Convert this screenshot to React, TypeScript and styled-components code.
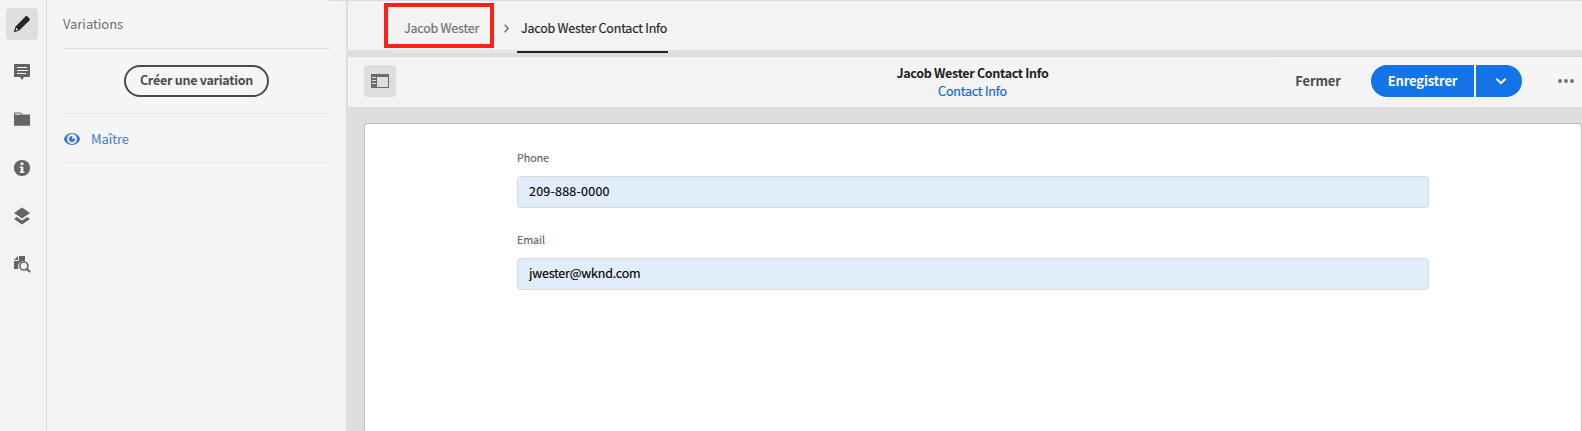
import React from 'react';
import styled, { createGlobalStyle, css } from 'styled-components';

const GlobalStyle = createGlobalStyle`
  * { box-sizing: border-box; }
  html, body, #root { height: 100%; }
  body {
    margin: 0;
    overflow: hidden;
    background: #ddd;
    font-family: "Noto Sans CJK JP", "Noto Sans", sans-serif;
    font-size: 12.5px;
    line-height: 18px;
    color: #1e1e1e;
  }
`;

const Page = styled.div`
  display: flex;
  height: 100vh;
`;

const Rail = styled.nav`
  display: flex;
  flex-direction: column;
  align-items: center;
  gap: 16px;
  width: 47px;
  padding: 8px 2px 0 0;
  background: #f3f3f3;
  border-right: 1px solid #dcdcdc;
`;

const RailButton = styled.button<{ $active?: boolean }>`
  display: flex;
  align-items: center;
  justify-content: center;
  width: 32px;
  height: 32px;
  padding: 0;
  border: 0;
  border-radius: 4px;
  color: #646464;
  background: ${p => (p.$active ? '#dedede' : 'transparent')};
  svg { display: block; }
`;

const SidePanel = styled.aside`
  width: 299px;
  padding: 5px 10px 0 7px;
  background: #f3f3f3;
`;

const PanelEdge = styled.div`
  width: 18px;
  height: 1px;
  margin: -5px -10px 5px auto;
  background: #ddd;
`;

const PanelCard = styled.section`
  height: 218px;
  padding: 0 6px 0 9px;
  background: #f5f5f5;
`;

const PanelTitle = styled.div`
  height: 43px;
  padding-top: 9px;
  border-bottom: 1px solid #dfdfdf;
  font-size: 13px;
  letter-spacing: -0.05px;
  color: #6e6e6e;
`;

const PanelAction = styled.div`
  display: flex;
  justify-content: center;
  height: 65px;
  padding-top: 16px;
  border-bottom: 1px solid #e8e8e8;
`;

const OutlineButton = styled.button`
  width: 145px;
  height: 32px;
  padding: 0 0 2px;
  border: 2px solid #4b4b4b;
  border-radius: 16px;
  background: #f5f5f5;
  color: #4b4b4b;
  font: 700 12.5px/18px "Noto Sans CJK JP", sans-serif;
  letter-spacing: -0.25px;
  white-space: nowrap;
`;

const VariationItem = styled.div`
  display: flex;
  align-items: center;
  gap: 11px;
  height: 49px;
  padding: 2px 0 0 1px;
  border-bottom: 1px solid #e8e8e8;
  color: #3f78d0;
  font-size: 13px;
  letter-spacing: -0.1px;
`;

const Main = styled.main`
  display: flex;
  flex: 1;
  flex-direction: column;
  min-width: 0;
  padding: 1px 0 0 2px;
  background: #ddd;
`;

const Breadcrumbs = styled.header`
  display: flex;
  height: 49px;
  padding-left: 36px;
  background: #f3f3f3;
  letter-spacing: -0.22px;
`;

const Highlight = styled.div`
  width: 110px;
  height: 45px;
  margin-top: 2px;
  padding: 12px 0 0 16px;
  border: 4px solid #ff1f1c;
  color: #6e6e6e;
  -webkit-text-stroke: 0.15px;
`;

const Separator = styled.div`
  width: 23px;
  padding: 23px 0 0 10px;
  svg { display: block; }
`;

const CurrentCrumb = styled.div`
  width: 151px;
  height: 52px;
  padding: 18px 0 0 4px;
  border-bottom: 2px solid #222;
  white-space: nowrap;
  -webkit-text-stroke: 0.15px;
`;

const CrumbTrack = styled.div`
  width: 284px;
  height: 2px;
  flex: none;
  margin: 1px 0 0 44px;
  background: linear-gradient(to right, #e8e8e8 125px, transparent 125px 276px, #e3e3e3 276px);
`;

const Toolbar = styled.div`
  display: grid;
  grid-template-columns: 1fr auto 1fr;
  align-items: center;
  flex: none;
  height: 50px;
  margin-top: 4px;
  padding: 0 0 2px 16px;
  background: #f3f3f3;
`;

const Heading = styled.div`
  padding: 1px 1px 0 0;
  text-align: center;
`;

const Title = styled.div`
  font-weight: 700;
  letter-spacing: -0.32px;
`;

const ModelLink = styled.div`
  color: #0d66d0;
  letter-spacing: -0.2px;
  -webkit-text-stroke: 0.15px;
`;

const Actions = styled.div`
  display: flex;
  align-items: center;
  justify-self: end;
  height: 36px;
  padding-right: 8px;
  background: #f5f5f5;
`;

const buttonText = css`
  font: 700 13px/18px "Noto Sans CJK JP", sans-serif;
  letter-spacing: -0.15px;
  border: 0;
`;

const QuietButton = styled.button`
  ${buttonText}
  width: 97px;
  height: 32px;
  padding: 0 9px 0 0;
  background: transparent;
  color: #4b4b4b;
`;

const SplitButton = styled.div`
  display: flex;
  gap: 2px;
  height: 32px;
  background: linear-gradient(#fff, #fff) 103px 0 / 2px 100% no-repeat;
  border-radius: 16px;
  overflow: hidden;
`;

const SaveButton = styled.button`
  ${buttonText}
  width: 103px;
  padding: 0;
  background: #1473e6;
  color: #fff;
`;

const MenuButton = styled.button`
  display: flex;
  align-items: center;
  justify-content: center;
  width: 46px;
  padding: 0 0 0 4px;
  border: 0;
  background: #1473e6;
`;

const MoreIcon = styled.svg`
  display: block;
  margin-left: 36px;
`;

const Sheet = styled.section`
  flex: 1;
  margin: 16px 0 0 16px;
  padding: 24px 152px 0;
  border: 1px solid #bdbdbd;
  border-bottom: 0;
  border-radius: 4px 4px 0 0;
  background: #fff;
`;

const Field = styled.label`
  display: block;
  height: 82px;
`;

const FieldLabel = styled.div`
  height: 28px;
  font-size: 10.8px;
  letter-spacing: -0.12px;
  color: #5c5c5c;
  -webkit-text-stroke: 0.1px;
`;

const Input = styled.input<{ $spacing: number }>`
  display: block;
  width: 912px;
  height: 32px;
  padding: 0 11px 4px;
  border: 1px solid #d9dbde;
  border-radius: 4px;
  background: #e1edfb;
  color: #000;
  font: 12.5px/18px "Noto Sans CJK JP", sans-serif;
  letter-spacing: ${p => p.$spacing}px;
  -webkit-text-stroke: 0.15px;
`;

const icon = { width: 18, height: 18, viewBox: '0 0 18 18', fill: 'currentColor' };

const PencilIcon = () => (
  <svg {...icon} fill="#262626">
    <path d="M12.7 1.3a1 1 0 0 1 1.5 0l2.5 2.5a1 1 0 0 1 0 1.4L6.2 15.6 1.6 17a.5.5 0 0 1-.6-.6l1.4-4.6z" />
    <path d="M3.2 12.7l2.1 2.1-2.7.8z" fill="#dedede" />
  </svg>
);

const CommentIcon = () => (
  <svg {...icon}>
    <path d="M1.7 1h14.6a.7.7 0 0 1 .7.7v11.6a.7.7 0 0 1-.7.7H11l-2 3-2-3H1.7a.7.7 0 0 1-.7-.7V1.7a.7.7 0 0 1 .7-.7z" />
    <path d="M4 4.5h10M4 7.5h11M4 10.5h9" stroke="#f3f3f3" strokeWidth="1" />
  </svg>
);

const FolderIcon = () => (
  <svg {...icon}>
    <path d="M1 3.5V14a.7.7 0 0 0 .7.7h14.6a.7.7 0 0 0 .7-.7V4.2a.7.7 0 0 0-.7-.7H9.5L7.6 1.7a1 1 0 0 0-.7-.2H1.8a.8.8 0 0 0-.8.8z" />
    <path d="M2 2.5h4.8l1.3 1.2H2z" fill="#f3f3f3" />
  </svg>
);

const InfoIcon = () => (
  <svg {...icon}>
    <circle cx="9" cy="9" r="8.1" />
    <circle cx="9" cy="4.8" r="1.5" fill="#f3f3f3" />
    <path d="M6.8 7.4h3.5v5h1.1v1.7H6.8v-1.7h1V9.1h-1z" fill="#f3f3f3" />
  </svg>
);

const LayersIcon = () => (
  <svg {...icon}>
    <path d="M9 .5l8 5.5-8 5.5L1 6z" />
    <path d="M3.7 10.1L9 13.4l5.3-3.3L17 12l-8 5.6L1 12z" />
  </svg>
);

const FileSearchIcon = () => (
  <svg {...icon}>
    <path d="M5.9 1v5H1v8h4.6a5.5 5.5 0 0 1 5.3-7.9H12V1z" />
    <path d="M1 5l4-4v4z" />
    <circle cx="10.9" cy="11" r="4" fill="none" stroke="currentColor" strokeWidth="1.6" />
    <path d="M13.8 13.8l2.7 2.7" stroke="currentColor" strokeWidth="2.1" strokeLinecap="round" />
  </svg>
);

const EyeIcon = () => (
  <svg width="16" height="12" viewBox="0 0 16 12">
    <path d="M8 0C3.8 0 0 3.6 0 6s3.8 6 8 6 8-3.6 8-6-3.8-6-8-6z" fill="#3f78d0" />
    <circle cx="8" cy="6" r="4.9" fill="#f5f5f5" />
    <circle cx="8" cy="6" r="3.1" fill="#3f78d0" />
    <circle cx="9.4" cy="4.5" r="1.4" fill="#f5f5f5" />
  </svg>
);

const PanelIcon = () => (
  <svg width="18" height="14" viewBox="0 0 18 14">
    <path d="M0 0h18v14H0z" fill="#6b6b6b" />
    <path d="M6 3h11v10H6z" fill="#dedede" />
    <path d="M1 3.5h4M1 6.5h4M1 9.5h4" stroke="#dedede" />
  </svg>
);

const railIcons = [PencilIcon, CommentIcon, FolderIcon, InfoIcon, LayersIcon, FileSearchIcon];

const fields = [
  { label: 'Phone', value: '209-888-0000', spacing: 0.22 },
  { label: 'Email', value: 'jwester@wknd.com', spacing: -0.22 },
];

export default function App() {
  return (
    <Page>
      <GlobalStyle />
      <Rail>
        {railIcons.map((Icon, i) => (
          <RailButton key={i} $active={i === 0}><Icon /></RailButton>
        ))}
      </Rail>
      <SidePanel>
        <PanelEdge />
        <PanelCard>
          <PanelTitle>Variations</PanelTitle>
          <PanelAction><OutlineButton>Créer une variation</OutlineButton></PanelAction>
          <VariationItem><EyeIcon />Maître</VariationItem>
        </PanelCard>
      </SidePanel>
      <Main>
        <Breadcrumbs>
          <Highlight>Jacob Wester</Highlight>
          <Separator>
            <svg width="5" height="9" viewBox="0 0 5 9" fill="none" stroke="#6e6e6e" strokeWidth="1.4"><path d="M.6.7l3.6 3.8L.6 8.3" /></svg>
          </Separator>
          <CurrentCrumb>Jacob Wester Contact Info</CurrentCrumb>
        </Breadcrumbs>
        <CrumbTrack />
        <Toolbar>
          <RailButton $active><PanelIcon /></RailButton>
          <Heading>
            <Title>Jacob Wester Contact Info</Title>
            <ModelLink>Contact Info</ModelLink>
          </Heading>
          <Actions>
            <QuietButton>Fermer</QuietButton>
            <SplitButton>
              <SaveButton>Enregistrer</SaveButton>
              <MenuButton>
                <svg width="10" height="7" viewBox="0 0 10 7" fill="none" stroke="#fff" strokeWidth="2" strokeLinecap="round"><path d="M1 1.2l4 4 4-4" /></svg>
              </MenuButton>
            </SplitButton>
            <MoreIcon width="16" height="4" viewBox="0 0 16 4" fill="#6e6e6e">
              <circle cx="2" cy="2" r="1.9" /><circle cx="8" cy="2" r="1.9" /><circle cx="14" cy="2" r="1.9" />
            </MoreIcon>
          </Actions>
        </Toolbar>
        <Sheet>
          {fields.map(f => (
            <Field key={f.label}>
              <FieldLabel>{f.label}</FieldLabel>
              <Input $spacing={f.spacing} defaultValue={f.value} />
            </Field>
          ))}
        </Sheet>
      </Main>
    </Page>
  );
}
